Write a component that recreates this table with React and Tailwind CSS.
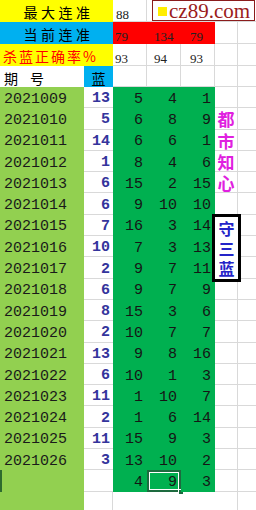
import React from "react";

const rows = [
  ["2021009", 13, 5, 4, 1],
  ["2021010", 5, 6, 8, 9],
  ["2021011", 14, 6, 6, 1],
  ["2021012", 1, 8, 4, 6],
  ["2021013", 6, 15, 2, 15],
  ["2021014", 6, 9, 10, 10],
  ["2021015", 7, 16, 3, 14],
  ["2021016", 10, 7, 3, 13],
  ["2021017", 2, 9, 7, 11],
  ["2021018", 6, 9, 7, 9],
  ["2021019", 8, 15, 3, 6],
  ["2021020", 2, 10, 7, 7],
  ["2021021", 13, 9, 8, 16],
  ["2021022", 6, 10, 1, 3],
  ["2021023", 11, 1, 10, 7],
  ["2021024", 2, 1, 6, 14],
  ["2021025", 11, 15, 9, 3],
  ["2021026", 3, 13, 10, 2],
  ["", "", 4, 9, 3],
];

const sideText = { 1: "都", 2: "市", 3: "知", 4: "心" };

const cjk = "font-['Noto_Sans_CJK_SC',sans-serif]";
const line = "border-[#d9d9d9]";

const HeadNum = ({ w, pl, bg = "bg-white border-r border-b " + line, children }) => (
  <div
    className={`${w} ${bg} h-full flex items-center pt-[7px] ${pl} font-['Liberation_Serif',serif] text-[13px] leading-none text-[#222]`}
  >
    {children}
  </div>
);

const App = () => {
  return (
    <div className="relative w-[256px] h-[510px] overflow-hidden bg-white flex flex-col font-['Liberation_Mono',monospace]">
      {/* row 1 */}
      <div className="flex h-[22px] shrink-0">
        <div className={`w-[113px] bg-[#ffff00] flex items-center justify-center pt-[2px] pl-[4px] ${cjk} text-[14px] leading-none tracking-[3.5px] text-black`}>
          最大连准
        </div>
        <HeadNum w="w-[34px]" pl="pl-[3px]">88</HeadNum>
        <HeadNum w="w-[34px]" pl="" />
        <HeadNum w="w-[34px]" pl="" />
        <HeadNum w="w-[23px]" pl="" />
        <div className={`flex-1 border-b ${line}`} />
      </div>

      {/* row 2 */}
      <div className="flex h-[22px] shrink-0">
        <div className={`w-[113px] bg-[#00b0f0] flex items-center justify-center pt-[2px] pl-[4px] ${cjk} text-[14px] leading-none tracking-[3.5px] text-black`}>
          当前连准
        </div>
        <HeadNum w="w-[34px]" pl="pl-[2px]" bg="bg-[#ff0000]">79</HeadNum>
        <HeadNum w="w-[34px]" pl="pl-[7px]" bg="bg-[#ff0000]">134</HeadNum>
        <HeadNum w="w-[34px]" pl="pl-[9px]" bg="bg-[#ff0000]">79</HeadNum>
        <HeadNum w="w-[23px]" pl="" />
        <div className={`flex-1 border-b ${line}`} />
      </div>

      {/* row 3 */}
      <div className="flex h-[22px] shrink-0">
        <div className={`w-[113px] bg-[#ffff00] flex items-center pt-[2px] pl-[3px] ${cjk} text-[14px] leading-none tracking-[2px] text-[#ff0000]`}>
          杀蓝正确率%
        </div>
        <HeadNum w="w-[34px]" pl="pl-[2px]">93</HeadNum>
        <HeadNum w="w-[34px]" pl="pl-[7px]">94</HeadNum>
        <HeadNum w="w-[34px]" pl="pl-[9px]">93</HeadNum>
        <HeadNum w="w-[23px]" pl="" />
        <div className={`flex-1 border-b ${line}`} />
      </div>

      {/* row 4 */}
      <div className="flex h-[21px] shrink-0">
        <div className={`w-[84px] bg-white flex items-center pt-[2px] pl-[4px] gap-[12px] ${cjk} text-[14px] leading-none text-black`}>
          <span>期</span>
          <span>号</span>
        </div>
        <div className={`w-[29px] bg-[#00b0f0] flex items-center justify-center pt-[2px] ${cjk} text-[14px] leading-none text-black`}>
          蓝
        </div>
        <HeadNum w="w-[34px]" pl="" />
        <HeadNum w="w-[34px]" pl="" />
        <HeadNum w="w-[34px]" pl="" />
        <HeadNum w="w-[23px]" pl="" />
        <div className={`flex-1 border-b ${line}`} />
      </div>

      {/* data rows */}
      {rows.map((r, i) => (
        <div key={i} className="flex h-[21.3px] shrink-0">
          <div
            className={`w-[84px] bg-[#92d050] flex items-center pt-[3px] pl-[4px] text-[15px] leading-none text-[#1a1a1a] ${
              i === rows.length - 1 ? "border-l-2 border-[#2e6b2e]" : ""
            }`}
          >
            {r[0]}
          </div>
          <div className={`w-[29px] bg-white border-b ${line} flex items-center justify-end pt-[3px] pr-[3px] text-[15px] leading-none font-bold text-[#34349c]`}>
            {r[1]}
          </div>
          {[2, 3, 4].map((c) => (
            <div
              key={c}
              className="relative w-[34px] bg-[#00b050] flex items-center justify-end pt-[3px] pr-[4px] text-[15px] leading-none text-[#151515]"
            >
              {r[c]}
              {i === rows.length - 1 && c === 3 && (
                <>
                  <div className="absolute inset-0 border-2 border-[#1d6b3f] shadow-[inset_0_0_0_1px_#ffffff]" />
                  <div className="absolute right-[-3px] bottom-[-3px] w-[6px] h-[6px] bg-[#1d6b3f] border border-white" />
                </>
              )}
            </div>
          ))}
          <div className={`w-[23px] bg-white border-r border-b ${line} flex items-center justify-center pt-[1px] ${cjk} text-[17px] leading-none font-bold text-[#e020e0]`}>
            {sideText[i]}
          </div>
          <div className={`flex-1 border-b ${line}`} />
        </div>
      ))}

      {/* remainder row */}
      <div className="flex flex-1">
        <div className="w-[84px] bg-[#92d050]" />
        <div className={`w-[29px] bg-white border-r ${line}`} />
        <div className="w-[102px] bg-white" />
        <div className={`w-[23px] bg-white border-r ${line}`} />
        <div className="flex-1" />
      </div>

      {/* logo overlay */}
      <div className="absolute left-[152px] top-0 w-[103px] h-[21px] bg-white border border-[#8b1c1c] flex items-center pl-[5px] gap-[2px]">
        <div className="w-[9px] h-[9px] bg-[#ffee00] mt-[1px]" />
        <span className="font-['Liberation_Serif',serif] text-[21px] leading-none text-[#9b1b1b] mt-[1px]">
          cz89.com
        </span>
      </div>

      {/* 守三蓝 text box */}
      <div className={`absolute left-[212px] top-[214px] w-[29px] h-[68px] bg-white border-[3px] border-black flex flex-col items-center justify-around py-[1px] ${cjk} text-[16px] leading-none font-bold text-[#2424c8]`}>
        <span>守</span>
        <span>三</span>
        <span>蓝</span>
      </div>
    </div>
  );
};

export default App;
